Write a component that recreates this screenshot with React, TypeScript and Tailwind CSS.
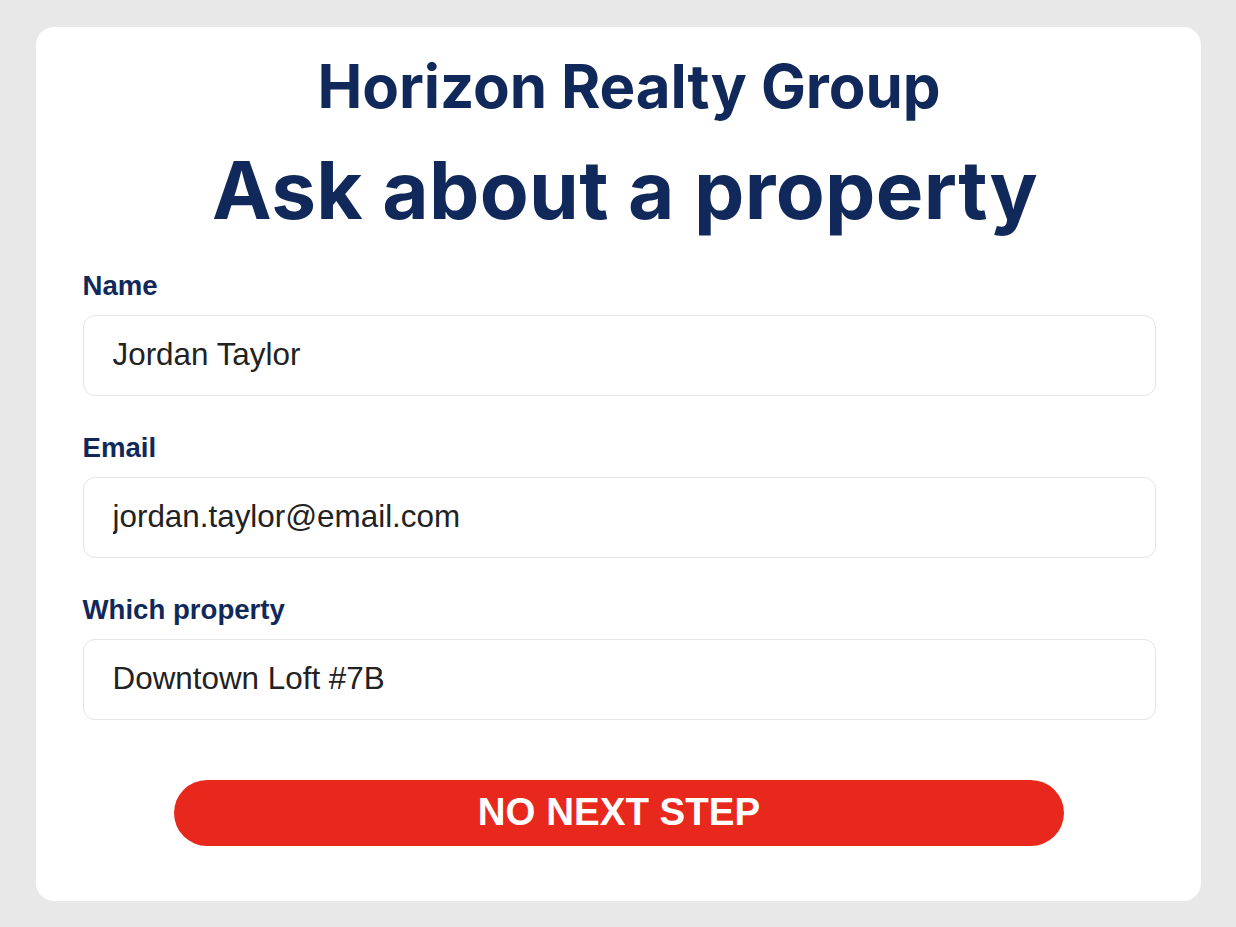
import React from "react";

const fields = [
  { label: "Name", value: "Jordan Taylor" },
  { label: "Email", value: "jordan.taylor@email.com" },
  { label: "Which property", value: "Downtown Loft #7B" },
];

export default function App() {
  return (
    <div className="min-h-screen w-full bg-[#e8e8e8] flex items-center justify-center">
      <div className="w-[1165px] h-[874px] bg-white rounded-[18px] pl-[47px] pr-[45px] pt-[23px] flex flex-col">
        <h1 className="pl-[20px] text-center text-[60px] leading-[72px] font-bold text-[#10295a] font-['Inter',sans-serif] tracking-[-0.1px]">
          Horizon Realty Group
        </h1>
        <h2 className="mt-[20px] pl-[12px] text-center text-[80px] leading-[96px] font-bold text-[#10295a] font-['Inter',sans-serif] tracking-[0.3px]">
          Ask about a property
        </h2>
        <div className="mt-[32px] flex flex-col gap-[36px]">
          {fields.map((f) => (
            <div key={f.label} className="flex flex-col">
              <label className="text-[27.6px] leading-[32px] font-bold text-[#10295a] font-['Liberation_Sans',Arial,sans-serif]">
                {f.label}
              </label>
              <input
                readOnly
                defaultValue={f.value}
                className="mt-[13px] h-[81px] w-full rounded-[12px] border border-[#e2e4e8] bg-white px-[29px] text-[31.4px] text-[#222222] font-['Liberation_Sans',Arial,sans-serif] outline-none"
              />
            </div>
          ))}
        </div>
        <div className="mt-[60px] flex justify-center">
          <button className="w-[890px] h-[66px] rounded-full bg-[#e8281c] text-white text-[38.5px] font-bold font-['Liberation_Sans',Arial,sans-serif] leading-none">
            NO NEXT STEP
          </button>
        </div>
      </div>
    </div>
  );
}
